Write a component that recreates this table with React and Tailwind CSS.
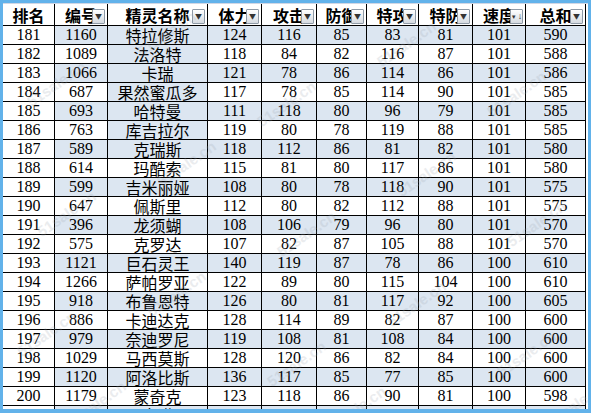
import React from "react";

const rows = [
  [181, 1160, "特拉修斯", 124, 116, 85, 83, 81, 101, 590],
  [182, 1089, "法洛特", 118, 84, 82, 116, 87, 101, 588],
  [183, 1066, "卡瑞", 121, 78, 86, 114, 86, 101, 586],
  [184, 687, "果然蜜瓜多", 117, 78, 85, 114, 90, 101, 585],
  [185, 693, "哈特曼", 111, 118, 80, 96, 79, 101, 585],
  [186, 763, "库吉拉尔", 119, 80, 78, 119, 88, 101, 585],
  [187, 589, "克瑞斯", 118, 112, 86, 81, 82, 101, 580],
  [188, 614, "玛酷索", 115, 81, 80, 117, 86, 101, 580],
  [189, 599, "吉米丽娅", 108, 80, 78, 118, 90, 101, 575],
  [190, 647, "佩斯里", 112, 80, 82, 112, 88, 101, 575],
  [191, 396, "龙须蝴", 108, 106, 79, 96, 80, 101, 570],
  [192, 575, "克罗达", 107, 82, 87, 105, 88, 101, 570],
  [193, 1121, "巨石灵王", 140, 119, 87, 78, 86, 100, 610],
  [194, 1266, "萨帕罗亚", 122, 89, 80, 115, 104, 100, 610],
  [195, 918, "布鲁恩特", 126, 80, 81, 117, 92, 100, 605],
  [196, 886, "卡迪达克", 128, 114, 89, 82, 87, 100, 600],
  [197, 979, "奈迪罗尼", 119, 108, 81, 108, 84, 100, 600],
  [198, 1029, "马西莫斯", 128, 120, 86, 82, 84, 100, 600],
  [199, 1120, "阿洛比斯", 136, 117, 85, 77, 85, 100, 600],
  [200, 1179, "蒙奇克", 123, 118, 86, 90, 81, 100, 598],
  [201, 1180, "阿吉诺亚", 120, 110, 85, 90, 85, 100, 590],
];

const headers = ["排名", "编号", "精灵名称", "体力", "攻击", "防御", "特攻", "特防", "速度", "总和"];

const grid =
  "grid grid-cols-[52px_53px_100px_54px_55px_50px_52px_54px_53px_60px]";

function DropBtn({ sort }) {
  return (
    <span className="absolute right-[2px] top-[5px] w-[13px] h-[15px] border border-[#8f9aa6] rounded-[1px] bg-gradient-to-b from-white to-[#d6dbe1] flex items-center justify-center text-[#333] leading-none">
      {sort ? (
        <span className="flex items-center text-[9px] font-[Liberation_Sans]">
          <span className="text-[6px] mr-[1px]">▼</span>↓
        </span>
      ) : (
        <span className="text-[7px]">▼</span>
      )}
    </span>
  );
}

const watermarks = [
  [20, 70], [130, 20], [250, 90], [370, 30], [480, 80],
  [30, 200], [150, 150], [270, 220], [390, 160], [500, 210],
  [10, 320], [140, 280], [260, 350], [380, 290], [490, 340],
  [60, 390], [320, 395], [540, 390],
];

export default function App() {
  return (
    <div className="w-[591px] h-[413px] bg-[#62b2ea] pt-[3px] pl-[3px] pr-[3px] pb-[4px] overflow-hidden">
      <div
        className="relative w-full h-full bg-white overflow-hidden text-black"
        style={{ fontFamily: '"Liberation Serif", "Noto Sans CJK SC", serif' }}
      >
        <div className={`${grid} h-[23px] border-t border-[#d0d7e5]`}>
          {headers.map((h, i) => (
            <div
              key={h}
              className="relative border-r border-b border-black flex items-center justify-center overflow-hidden text-[16px] font-bold leading-none"
              style={{ fontFamily: '"Noto Sans CJK SC", sans-serif' }}
            >
              <span className="whitespace-nowrap">{h}</span>
              {i > 0 && <DropBtn sort={i === 8} />}
            </div>
          ))}
        </div>
        {rows.map((r, ri) => {
          const band = ri % 2 === 0;
          return (
            <div key={r[0]} className={`${grid} h-[19px]`}>
              {r.map((v, ci) => {
                let bg = "bg-white";
                if (ci > 0 && band) bg = "bg-[#dce6f1]";
                if (ci === 2 && (r[0] === 182 || r[0] === 184 || r[0] === 186)) bg = "bg-[#dce6f1]";
                return (
                  <div
                    key={ci}
                    className={`${bg} border-r border-b border-black flex items-center justify-center overflow-hidden whitespace-nowrap leading-none ${ci === 2 ? "text-[16px]" : "text-[16px]"}`}
                    style={ci === 2 ? { fontFamily: '"Noto Sans CJK SC", sans-serif' } : undefined}
                  >
                    {v}
                  </div>
                );
              })}
            </div>
          );
        })}
        {watermarks.map(([x, y], i) => (
          <span
            key={i}
            className="absolute text-[15px] font-bold text-[#9aa3ad] opacity-20 -rotate-[35deg] pointer-events-none whitespace-nowrap"
            style={{ left: x, top: y, fontFamily: '"Liberation Sans", sans-serif' }}
          >
            51sale.cn
          </span>
        ))}
      </div>
    </div>
  );
}
